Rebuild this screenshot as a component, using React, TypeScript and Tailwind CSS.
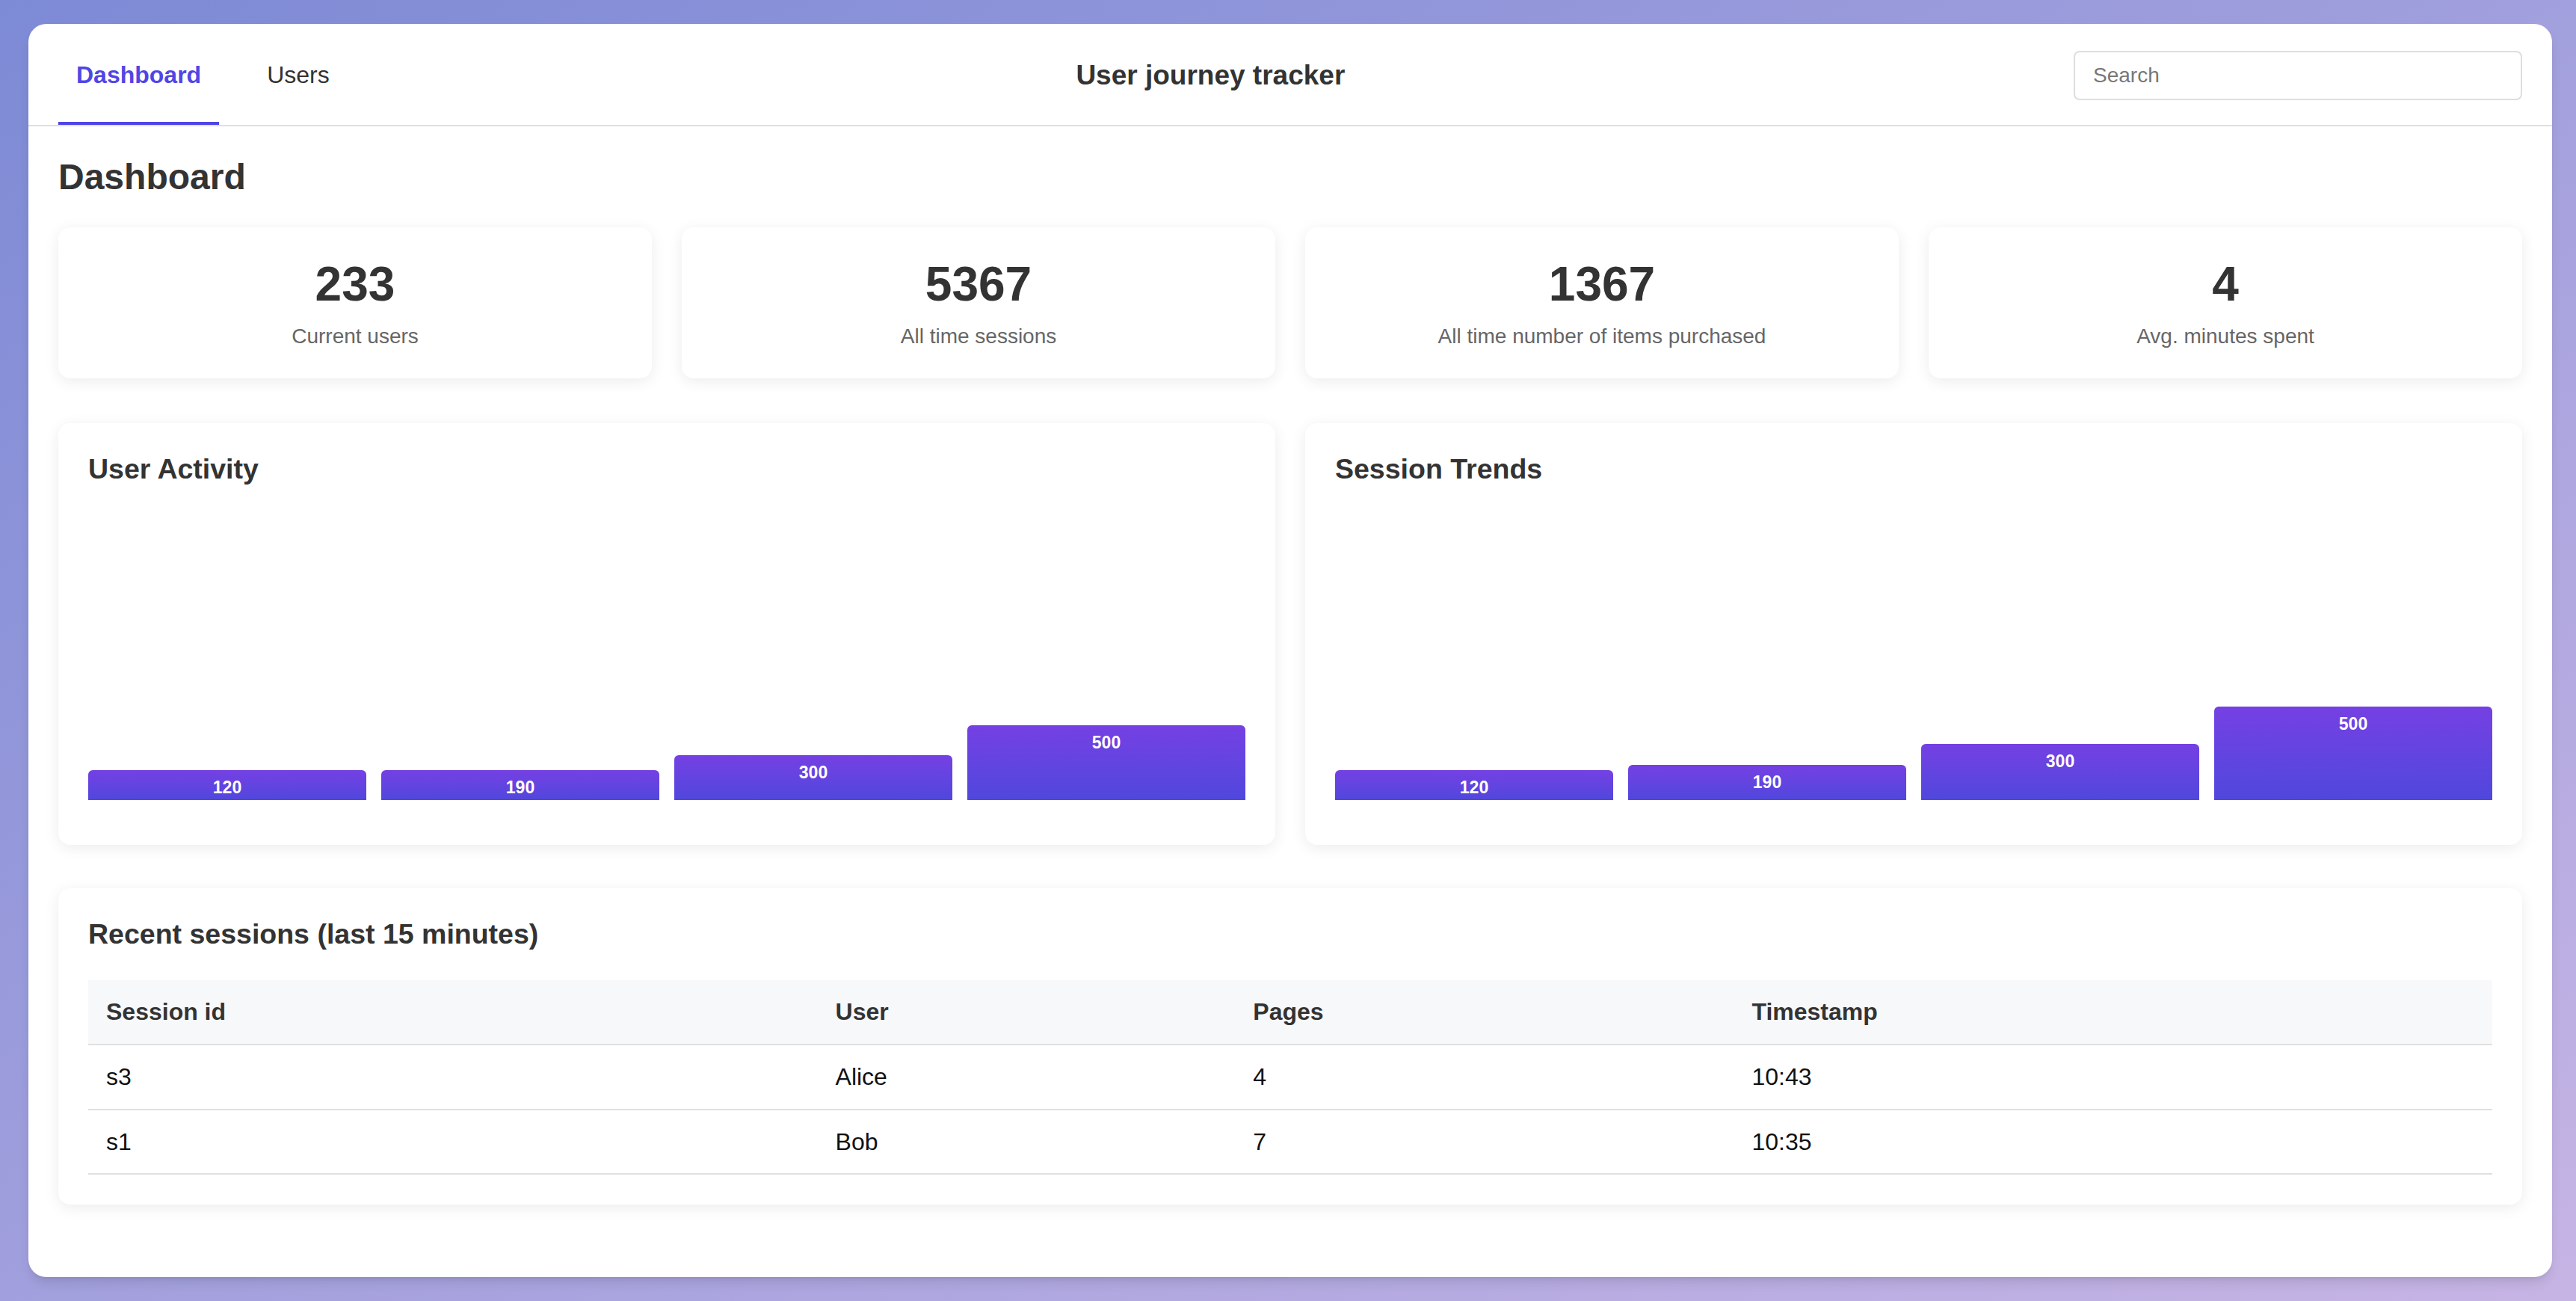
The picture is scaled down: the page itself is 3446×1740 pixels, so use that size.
import React from "react"

const stats = [
  { value: "233", label: "Current users" },
  { value: "5367", label: "All time sessions" },
  { value: "1367", label: "All time number of items purchased" },
  { value: "4", label: "Avg. minutes spent" },
]

const charts = [
  {
    title: "User Activity",
    bars: [
      { value: 120, height: 40 },
      { value: 190, height: 40 },
      { value: 300, height: 60 },
      { value: 500, height: 100 },
    ],
  },
  {
    title: "Session Trends",
    bars: [
      { value: 120, height: 40 },
      { value: 190, height: 47 },
      { value: 300, height: 75 },
      { value: 500, height: 125 },
    ],
  },
]

const sessions = [
  { id: "s3", user: "Alice", pages: 4, time: "10:43" },
  { id: "s1", user: "Bob", pages: 7, time: "10:35" },
]

const cardClass = "rounded-2xl bg-white shadow-[0_4px_20px_rgba(0,0,0,0.08)]"

function Header() {
  return (
    <header className="flex items-center justify-between border-b-2 border-[#e0e0e0] px-10">
      <nav className="flex gap-10">
        <button className="border-b-4 border-[#4f46e5] px-6 pt-[50px] pb-[44px] text-[32px] leading-[1.15] font-bold text-[#4f46e5]">
          Dashboard
        </button>
        <button className="border-b-4 border-transparent px-6 pt-[50px] pb-[44px] text-[32px] leading-[1.15] text-[#333]">
          Users
        </button>
      </nav>
      <h1 className="pt-1 text-[37px] leading-[1.15] font-bold text-[#333]">User journey tracker</h1>
      <input
        type="text"
        placeholder="Search"
        className="mt-1 h-[66px] w-[600px] rounded-lg border-2 border-[#dedede] px-6 text-[28px] text-[#333] placeholder:text-[#777] outline-none"
      />
    </header>
  )
}

function StatCard({ value, label }: { value: string; label: string }) {
  return (
    <div className={`${cardClass} p-10 text-center`}>
      <div className="text-[64px] leading-[1.15] font-bold text-[#333]">{value}</div>
      <div className="mt-4 text-[28px] leading-[1.15] text-[#666]">{label}</div>
    </div>
  )
}

function BarChart({ title, bars }: { title: string; bars: { value: number; height: number }[] }) {
  return (
    <div className={`${cardClass} p-10`}>
      <h3 className="text-[37.5px] leading-[1.15] font-bold text-[#333]">{title}</h3>
      <div className="mt-[21px] mb-5 flex h-[400px] items-end gap-5">
        {bars.map((b) => (
          <div
            key={b.value}
            className="flex flex-1 justify-center rounded-t-[6px] bg-linear-to-b from-[#7540e3] to-[#4f47dd] pt-[10px] text-[23px] leading-[1.15] font-bold text-white"
            style={{ height: b.height }}
          >
            {b.value}
          </div>
        ))}
      </div>
    </div>
  )
}

function SessionsTable() {
  return (
    <div className={`${cardClass} p-10`}>
      <h3 className="mb-10 text-[37.5px] leading-[1.15] font-bold text-[#333]">Recent sessions (last 15 minutes)</h3>
      <table className="w-full border-collapse text-left text-[32px] leading-[1.15]">
        <thead>
          <tr className="border-b-2 border-[#e0e0e0] bg-[#f7f8fa]">
            <th className="px-6 py-6 font-bold text-[#333]">Session id</th>
            <th className="px-6 py-6 font-bold text-[#333]">User</th>
            <th className="px-6 py-6 font-bold text-[#333]">Pages</th>
            <th className="px-6 py-6 font-bold text-[#333]">Timestamp</th>
          </tr>
        </thead>
        <tbody>
          {sessions.map((s) => (
            <tr key={s.id} className="border-b-2 border-[#e0e0e0] text-[#111]">
              <td className="px-6 py-6">{s.id}</td>
              <td className="px-6 py-6">{s.user}</td>
              <td className="px-6 py-6">{s.pages}</td>
              <td className="px-6 py-6">{s.time}</td>
            </tr>
          ))}
        </tbody>
      </table>
    </div>
  )
}

export default function App() {
  return (
    <div
      className="h-screen bg-linear-to-br from-[#7d8ad5] to-[#c6b4e4] py-8 pr-8 pl-[38px]"
      style={{ fontFamily: '"Liberation Sans", Arial, sans-serif' }}
    >
      <div className="h-full overflow-hidden rounded-3xl bg-white shadow-lg">
        <Header />
        <main className="p-10">
          <h2 className="mb-10 text-[48px] leading-[1.15] font-bold text-[#333]">Dashboard</h2>
          <div className="mb-[60px] grid grid-cols-4 gap-10">
            {stats.map((s) => (
              <StatCard key={s.label} value={s.value} label={s.label} />
            ))}
          </div>
          <div className="mb-[58px] grid grid-cols-2 gap-10">
            {charts.map((c) => (
              <BarChart key={c.title} title={c.title} bars={c.bars} />
            ))}
          </div>
          <SessionsTable />
        </main>
      </div>
    </div>
  )
}
